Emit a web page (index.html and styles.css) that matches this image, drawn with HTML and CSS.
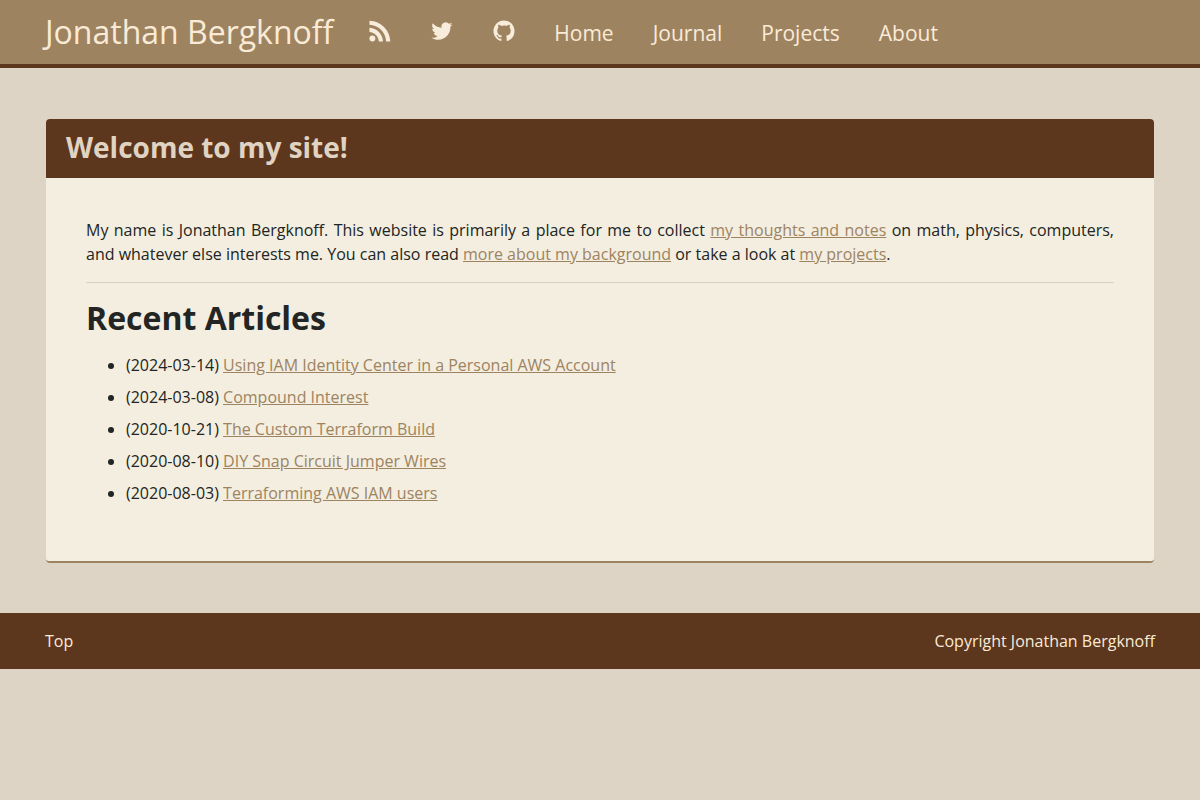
FILE: index.html
```html
<!DOCTYPE html>
<html lang="en">
<head>
    <meta charset="UTF-8">
    <meta name="viewport" content="width=device-width, initial-scale=1.0">
    <title>Jonathan Bergknoff</title>
    <link rel="stylesheet" href="styles.css">
</head>
<body>
    <header class="navbar" id="top">
        <a class="brand" href="#">Jonathan Bergknoff</a>
        <nav class="nav">
            <div class="nav-icons">
                <a href="#" aria-label="RSS feed">
                    <svg viewBox="0 0 24 24"><circle cx="3.700" cy="20.200" r="3.200"/><path d="M.5 8.500v4.600c5.600.4 9.800 4.600 10.200 10.300h4.600C14.900 15.200 8.700 8.900.5 8.500z"/><path d="M.5.700v4.600c9.900.4 17.800 8.200 18.200 18.100h4.600C22.900 11 12.900 1.100.5.700z"/></svg>
                </a>
                <a href="#" aria-label="Twitter">
                    <svg viewBox="0 0 24 24"><path d="M23.300 4.900c-.9.4-1.800.7-2.700.8 1-.6 1.700-1.500 2.100-2.600-.9.500-1.900.9-3 1.100A4.700 4.700 0 0 0 11.600 8.500C7.700 8.300 4.200 6.400 1.900 3.600c-1.300 2.200-.6 4.900 1.500 6.300-.8 0-1.500-.2-2.100-.6 0 2.300 1.600 4.300 3.800 4.700-.7.200-1.400.2-2.100.1.600 1.900 2.300 3.200 4.400 3.300-2 1.500-4.400 2.300-7 2 2.200 1.400 4.700 2.200 7.300 2.200 8.900 0 13.700-7.400 13.500-14.200.8-.7 1.500-1.500 2.100-2.500z"/></svg>
                </a>
                <a href="#" aria-label="GitHub">
                    <svg viewBox="0 0 24 24"><path d="M12 .5C5.650.5.5 5.650.5 12c0 5.080 3.290 9.390 7.860 10.910.58.110.790-.250.790-.550v-2.140c-3.200.7-3.870-1.360-3.870-1.360-.52-1.330-1.280-1.680-1.280-1.680-1.040-.710.080-.7.080-.7 1.150.080 1.760 1.190 1.760 1.190 1.030 1.760 2.690 1.250 3.350.960.100-.750.400-1.250.730-1.540-2.550-.290-5.240-1.280-5.240-5.680 0-1.260.450-2.280 1.180-3.090-.120-.290-.510-1.460.110-3.040 0 0 .970-.310 3.160 1.180A11 11 0 0 1 12 6.070c.980 0 1.960.130 2.880.390 2.190-1.490 3.150-1.180 3.150-1.180.63 1.580.24 2.750.120 3.040.74.810 1.180 1.830 1.180 3.090 0 4.410-2.690 5.380-5.260 5.670.41.360.78 1.060.78 2.130v3.150c0 .310.210.670.8.550A11.500 11.500 0 0 0 23.500 12C23.500 5.650 18.350.5 12 .5z"/></svg>
                </a>
            </div>
            <div class="nav-links">
                <a href="#">Home</a>
                <a href="#">Journal</a>
                <a href="#">Projects</a>
                <a href="#">About</a>
            </div>
        </nav>
    </header>

    <main class="content">
        <article class="card">
            <h1 class="card-title">Welcome to my site!</h1>
            <div class="card-body">
                <p class="intro">My name is Jonathan Bergknoff. This website is primarily a place for me to collect <a href="#">my thoughts and notes</a> on math, physics, computers, and whatever else interests me. You can also read <a href="#">more about my background</a> or take a look at <a href="#">my projects</a>.</p>
                <hr>
                <h2 class="section-title">Recent Articles</h2>
                <ul class="articles">
                    <li>(2024-03-14) <a href="#">Using IAM Identity Center in a Personal AWS Account</a></li>
                    <li>(2024-03-08) <a href="#">Compound Interest</a></li>
                    <li>(2020-10-21) <a href="#">The Custom Terraform Build</a></li>
                    <li>(2020-08-10) <a href="#">DIY Snap Circuit Jumper Wires</a></li>
                    <li>(2020-08-03) <a href="#">Terraforming AWS IAM users</a></li>
                </ul>
            </div>
        </article>
    </main>

    <footer class="footer">
        <a href="#top">Top</a>
        <span>Copyright Jonathan Bergknoff</span>
    </footer>
</body>
</html>
```
FILE: styles.css
```css
* {
    box-sizing: border-box;
}

body {
    margin: 0;
    background: #ddd4c6;
    color: #222523;
    font-family: "Open Sans", sans-serif;
    font-size: 16px;
    line-height: 24px;
}

a {
    color: #9e8361;
}

.navbar {
    display: flex;
    align-items: center;
    padding: 8px 45px;
    background: #9e8361;
    border-bottom: 4px solid #5c361d;
}

.navbar a {
    color: #faebd7;
    text-decoration: none;
}

.brand {
    font-size: 32px;
    line-height: 48px;
    white-space: nowrap;
}

.nav {
    display: flex;
    align-items: center;
    gap: 39px;
    margin-left: 36px;
}

.nav-icons {
    display: flex;
    gap: 40px;
    padding-bottom: 2px;
}

.nav-icons svg {
    display: block;
    width: 22px;
    height: 22px;
    fill: #f8ecda;
}

.nav-links {
    display: flex;
    gap: 39px;
    padding-top: 2px;
    font-size: 21px;
    line-height: 32px;
}

.content {
    padding: 51px 46px 50px;
}

.card {
    overflow: hidden;
    background: #f3eee0;
    border-bottom: 2px solid #9e8361;
    border-radius: 4px;
}

.card-title {
    margin: 0;
    padding: 8px 20px 11px;
    background: #5c361d;
    color: #e1d3c2;
    font-size: 28px;
    line-height: 40px;
}

.card-body {
    padding: 40px;
}

.intro {
    margin: 0 0 16px;
    text-align: justify;
}

hr {
    height: 1px;
    margin: 0 0 16px;
    border: 0;
    background: #d6d1c4;
}

.section-title {
    margin: 0 0 16px;
    font-size: 32px;
    line-height: 38px;
}

.articles {
    margin: 0 0 16px;
    padding-left: 40px;
}

.articles li {
    margin-bottom: 8px;
}

.footer {
    display: flex;
    justify-content: space-between;
    padding: 16px 45px;
    background: #5c361d;
    color: #faebd7;
}

.footer a {
    color: inherit;
    text-decoration: none;
}
```
